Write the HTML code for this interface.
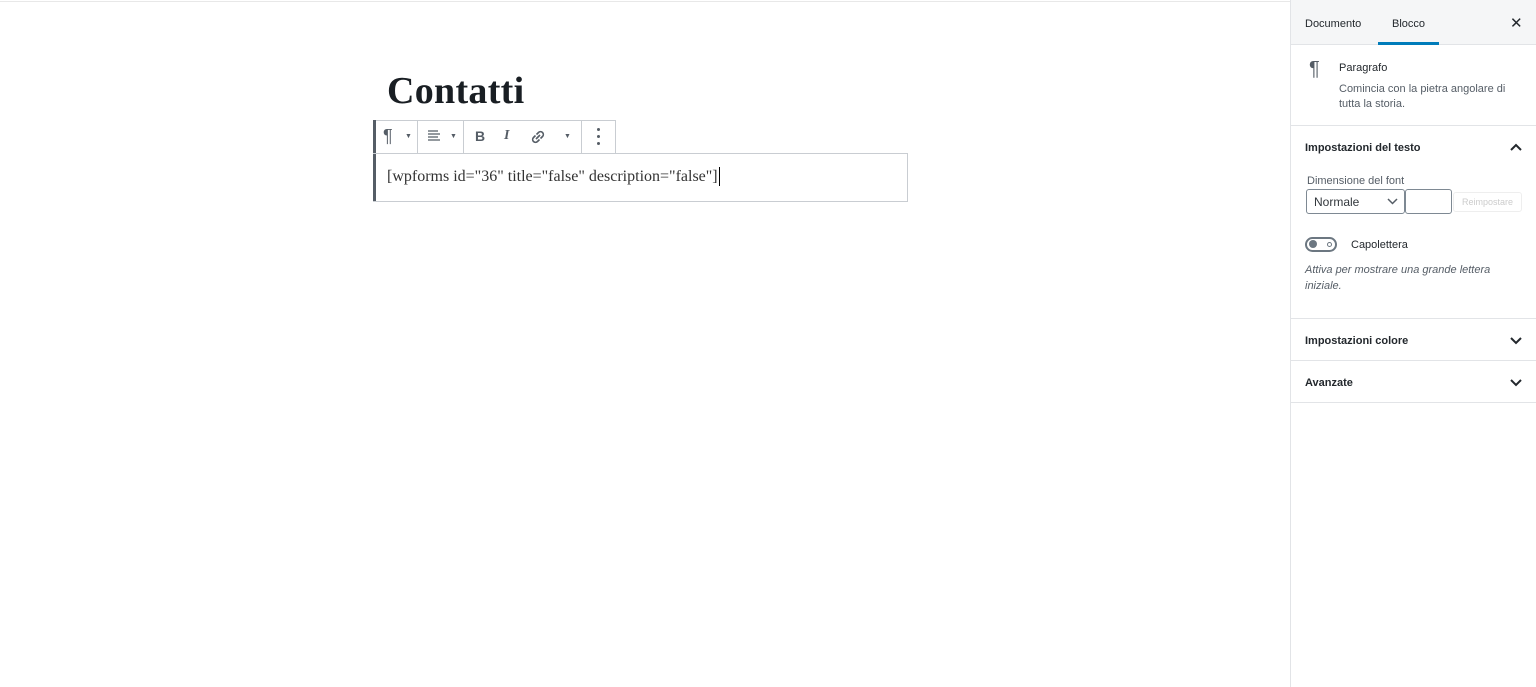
<!DOCTYPE html>
<html><head><meta charset="utf-8"><style>
*{box-sizing:border-box;margin:0;padding:0}
body{width:1536px;height:687px;background:#fff;position:relative;overflow:hidden;font-family:"Liberation Sans",sans-serif;color:#1e1e1e}
.a{position:absolute}
.s{font-size:11px}
.hd{font-size:11px;font-weight:bold;color:#23282d}
.ln{position:absolute;left:1291px;width:245px;height:1px;background:#e2e4e7}
svg{position:absolute}
</style></head><body>
<div class="a" style="left:0;top:1px;width:1290px;height:1px;background:#e8e8e8"></div>
<div class="a" style="left:387px;top:69px;font-family:'Liberation Serif',serif;font-weight:bold;font-size:38px;color:#191e23;letter-spacing:0.3px">Contatti</div>
<div class="a" style="left:373px;top:120px;width:243px;height:34px;border:1px solid #c9cdd2;border-bottom:none;background:#fff"></div>
<div class="a" style="left:373px;top:120px;width:3px;height:82px;background:#555d66"></div>
<div class="a" style="left:417px;top:120px;width:1px;height:33px;background:#c9cdd2"></div>
<div class="a" style="left:463px;top:120px;width:1px;height:33px;background:#c9cdd2"></div>
<div class="a" style="left:581px;top:120px;width:1px;height:33px;background:#c9cdd2"></div>
<div class="a" style="left:383px;top:126px;font-size:18px;color:#555d66">¶</div>
<div class="a" style="left:405px;top:133px;font-size:7px;color:#555d66">▼</div>
<svg style="left:427px;top:130px" width="14" height="12"><path d="M1 1h10M1 4h12M1 7h10M1 10h12" stroke="#555d66" stroke-width="1.3"/></svg>
<div class="a" style="left:450px;top:133px;font-size:7px;color:#555d66">▼</div>
<div class="a" style="left:475px;top:128px;font-size:14px;font-weight:bold;color:#555d66">B</div>
<div class="a" style="left:504px;top:128px;font-size:14px;font-style:italic;font-family:'Liberation Serif',serif;font-weight:bold;color:#555d66">I</div>
<svg style="left:529px;top:128px" width="18" height="18"><path d="M7 11l4-4M6.5 7.5l-2 2a2.8 2.8 0 004 4l2-2M11.5 10.5l2-2a2.8 2.8 0 00-4-4l-2 2" stroke="#555d66" stroke-width="1.6" fill="none"/></svg>
<div class="a" style="left:564px;top:133px;font-size:7px;color:#555d66">▼</div>
<div class="a" style="left:597px;top:128px;width:3px;height:3px;border-radius:2px;background:#555d66"></div>
<div class="a" style="left:597px;top:135px;width:3px;height:3px;border-radius:2px;background:#555d66"></div>
<div class="a" style="left:597px;top:142px;width:3px;height:3px;border-radius:2px;background:#555d66"></div>
<div class="a" style="left:373px;top:153px;width:535px;height:49px;border:1px solid #c9cdd2;border-left:none"></div>
<div class="a" style="left:387px;top:168px;font-family:'Liberation Serif',serif;font-size:16px;color:#333">[wpforms id="36" title="false" description="false"]</div>
<div class="a" style="left:719px;top:167px;width:1px;height:19px;background:#000"></div>
<div class="a" style="left:1290px;top:0;width:1px;height:687px;background:#e2e4e7"></div>
<div class="a" style="left:1291px;top:0;width:245px;height:45px;background:#f5f6f7;border-bottom:1px solid #e2e4e7"></div>
<div class="a s" style="left:1305px;top:18px;color:#23282d">Documento</div>
<div class="a s" style="left:1392px;top:18px;color:#23282d">Blocco</div>
<div class="a" style="left:1378px;top:42px;width:61px;height:3px;background:#007cba"></div>
<div class="a" style="left:1510px;top:14px;font-size:15px;color:#23282d">✕</div>
<div class="a" style="left:1309px;top:58px;font-size:20px;color:#555d66">¶</div>
<div class="a s" style="left:1339px;top:62px;color:#23282d">Paragrafo</div>
<div class="a s" style="left:1339px;top:82px;color:#555d66;line-height:15px;width:180px">Comincia con la pietra angolare di tutta la storia.</div>
<div class="ln" style="top:125px"></div>
<div class="a hd" style="left:1305px;top:142px">Impostazioni del testo</div>
<svg style="left:1510px;top:143px" width="12" height="9"><path d="M1 7l5-5 5 5" stroke="#23282d" stroke-width="2" fill="none"/></svg>
<div class="a s" style="left:1307px;top:175px;color:#555d66">Dimensione del font</div>
<div class="a" style="left:1306px;top:189px;width:99px;height:25px;border:1px solid #7e8993;border-radius:3px"></div>
<div class="a s" style="left:1314px;top:195px;font-size:12px;color:#32373c">Normale</div>
<svg style="left:1387px;top:198px" width="11" height="7"><path d="M1 1l4.5 4.5L10 1" stroke="#555d66" stroke-width="1.5" fill="none"/></svg>
<div class="a" style="left:1405px;top:189px;width:47px;height:25px;border:1px solid #7e8993;border-radius:3px"></div>
<div class="a" style="left:1453px;top:192px;width:69px;height:20px;border:1px solid #eee;border-radius:3px;font-size:9px;color:#ccc;text-align:center;line-height:18px">Reimpostare</div>
<div class="a" style="left:1305px;top:237px;width:32px;height:15px;border:2px solid #6c7781;border-radius:8px"></div>
<div class="a" style="left:1309px;top:240px;width:8px;height:8px;border-radius:5px;background:#6c7781"></div>
<div class="a" style="left:1327px;top:242px;width:5px;height:5px;border-radius:3px;border:1px solid #6c7781"></div>
<div class="a s" style="left:1351px;top:239px;color:#23282d">Capolettera</div>
<div class="a s" style="left:1305px;top:262px;font-style:italic;color:#555d66;line-height:16px;width:220px">Attiva per mostrare una grande lettera iniziale.</div>
<div class="ln" style="top:318px"></div>
<div class="a hd" style="left:1305px;top:335px">Impostazioni colore</div>
<svg style="left:1510px;top:336px" width="12" height="9"><path d="M1 2l5 5 5-5" stroke="#23282d" stroke-width="2" fill="none"/></svg>
<div class="ln" style="top:360px"></div>
<div class="a hd" style="left:1305px;top:377px">Avanzate</div>
<svg style="left:1510px;top:378px" width="12" height="9"><path d="M1 2l5 5 5-5" stroke="#23282d" stroke-width="2" fill="none"/></svg>
<div class="ln" style="top:402px"></div>
</body></html>
